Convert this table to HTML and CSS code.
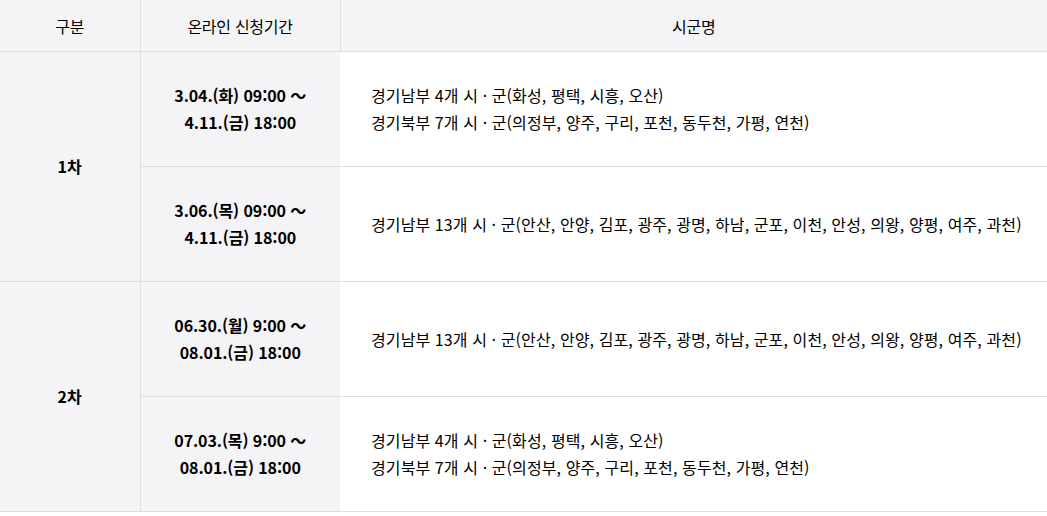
FILE: index.html
```html
<!DOCTYPE html>
<html lang="ko">
<head>
<meta charset="utf-8">
<link rel="stylesheet" href="styles.css">
</head>
<body>
<table class="sched">
  <colgroup>
    <col class="c1"><col class="c2"><col class="c3">
  </colgroup>
  <thead>
    <tr><th>구분</th><th>온라인 신청기간</th><th>시군명</th></tr>
  </thead>
  <tbody>
    <tr>
      <td class="round" rowspan="2">1차</td>
      <td class="period">3.04.(화) 09:00 ～<br>4.11.(금) 18:00</td>
      <td class="cities">경기남부 4개 시 · 군(화성, 평택, 시흥, 오산)<br>경기북부 7개 시 · 군(의정부, 양주, 구리, 포천, 동두천, 가평, 연천)</td>
    </tr>
    <tr>
      <td class="period">3.06.(목) 09:00 ～<br>4.11.(금) 18:00</td>
      <td class="cities">경기남부 13개 시 · 군(안산, 안양, 김포, 광주, 광명, 하남, 군포, 이천, 안성, 의왕, 양평, 여주, 과천)</td>
    </tr>
    <tr>
      <td class="round" rowspan="2">2차</td>
      <td class="period">06.30.(월) 9:00 ～<br>08.01.(금) 18:00</td>
      <td class="cities">경기남부 13개 시 · 군(안산, 안양, 김포, 광주, 광명, 하남, 군포, 이천, 안성, 의왕, 양평, 여주, 과천)</td>
    </tr>
    <tr>
      <td class="period">07.03.(목) 9:00 ～<br>08.01.(금) 18:00</td>
      <td class="cities">경기남부 4개 시 · 군(화성, 평택, 시흥, 오산)<br>경기북부 7개 시 · 군(의정부, 양주, 구리, 포천, 동두천, 가평, 연천)</td>
    </tr>
  </tbody>
</table>
</body>
</html>
```
FILE: styles.css
```css
html, body {
  margin: 0;
  padding: 0;
  background: #fff;
}
body {
  font-family: "Noto Sans CJK KR", "Noto Sans", sans-serif;
  color: #000;
}
.sched {
  width: 1047px;
  border-collapse: collapse;
  table-layout: fixed;
}
.c1 { width: 140px; }
.c2 { width: 200px; }
.sched th {
  height: 51px;
  padding: 0;
  background: #f4f4f6;
  font-size: 16px;
  font-weight: 400;
  border-bottom: 1px solid #dedede;
  border-left: 1px solid #dedede;
  letter-spacing: -0.3px;
}
.sched th:first-child { border-left: none; }
.sched td {
  height: 114px;
  padding: 0;
  border-bottom: 1px solid #dedede;
  font-size: 16px;
  line-height: 27px;
  letter-spacing: 0.1px;
}
.round {
  background: #f4f4f6;
  text-align: center;
  font-weight: 700;
}
.period {
  background: #f4f4f6;
  text-align: center;
  font-weight: 700;
  border-left: 1px solid #dedede;
  letter-spacing: -0.1px !important;
}
.cities {
  padding-left: 31px !important;
  background: #fff;
}
```
